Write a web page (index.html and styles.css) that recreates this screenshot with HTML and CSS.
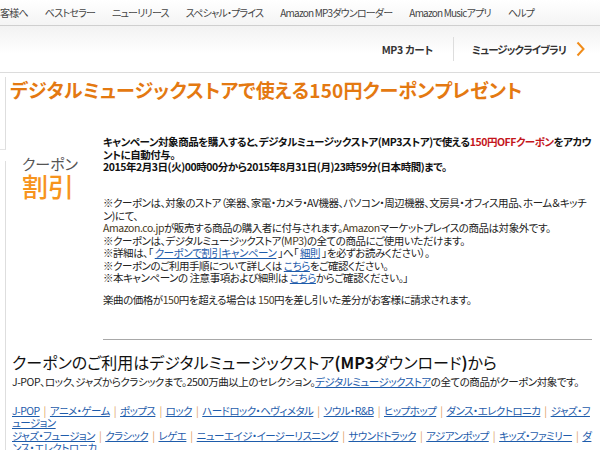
FILE: index.html
```html
<!DOCTYPE html>
<html lang="ja">
<head>
<meta charset="utf-8">
<title>デジタルミュージックストア クーポン</title>
<link rel="stylesheet" href="styles.css">
</head>
<body>
<nav class="topnav">
  <a href="#">客様へ</a>
  <a href="#">ベストセラー</a>
  <a href="#">ニューリリース</a>
  <a href="#">スペシャル・プライス</a>
  <a href="#">Amazon MP3ダウンローダー</a>
  <a href="#">Amazon Musicアプリ</a>
  <a href="#">ヘルプ</a>
</nav>
<div class="subnav">
  <a class="subnav-item cart" href="#">MP3 カート</a>
  <span class="subnav-divider"></span>
  <a class="subnav-item lib" href="#">ミュージックライブラリ</a>
  <svg class="chevron" width="9" height="16" viewBox="0 0 9 16"><path d="M1.5 1.5 L7.5 8 L1.5 14.5" fill="none" stroke="#f08c1a" stroke-width="2"/></svg>
</div>
<div class="page">
  <div class="rail">
    <div class="rail-seg first"></div>
    <div class="rail-seg second"></div>
  </div>
  <main class="content">
    <h1 class="title">デジタルミュージックストアで使える150円クーポンプレゼント</h1>
    <div class="coupon-row">
      <div class="badge">
        <div class="badge-top">クーポン</div>
        <div class="badge-main">割引</div>
      </div>
      <div class="coupon-text">
        <p class="lead">キャンペーン対象商品を購入すると、デジタルミュージックストア(MP3ストア)で使える<span class="red">150円OFFクーポン</span>をアカウントに自動付与。<br>2015年2月3日(火)00時00分から2015年8月31日(月)23時59分(日本時間)まで。</p>
        <p class="notes">※クーポンは、対象のストア（楽器、家電・カメラ・AV機器、パソコン・周辺機器、文房具・オフィス用品、ホーム＆キッチン)にて、<br><span class="latin">Amazon.co.jp</span>が販売する商品の購入者に付与されます。<span class="latin">Amazon</span>マーケットプレイスの商品は対象外です。<br>※クーポンは、デジタルミュージックストア(<span class="latin">MP3</span>)の全ての商品にご使用いただけます。<br>※詳細は、「 <a href="#">クーポンで割引キャンペーン</a> 」へ「 <a href="#">細則</a> 」を必ずお読みください）。<br>※クーポンのご利用手順について詳しくは <a href="#">こちら</a>をご確認ください。<br>※本キャンペーンの 注意事項および細則は <a href="#">こちら</a>からご確認ください。」</p>
        <p class="price">楽曲の価格が<span class="latin">150</span>円を超える場合は <span class="latin">150</span>円を差し引いた差分がお客様に請求されます。</p>
        <hr class="sep">
      </div>
    </div>
    <h2 class="store-title">クーポンのご利用はデジタルミュージックストア<b>(MP3</b>ダウンロード<b>)</b>から</h2>
    <p class="store-sub">J-POP、ロック、ジャズからクラシックまで。2500万曲以上のセレクション。<a href="#">デジタルミュージックストア</a>の全ての商品がクーポン対象です。</p>
    <p class="genres"><a href="#">J-POP</a><span class="bar">|</span><a href="#">アニメ・ゲーム</a><span class="bar">|</span><a href="#">ポップス</a><span class="bar">|</span><a href="#">ロック</a><span class="bar">|</span><a href="#">ハードロック・ヘヴィメタル</a><span class="bar">|</span><a href="#">ソウル・R&amp;B</a><span class="bar">|</span><a href="#">ヒップホップ</a><span class="bar">|</span><a href="#">ダンス・エレクトロニカ</a><span class="bar">|</span><a href="#">ジャズ・フュージョン</a></p>
    <p class="genres"><a href="#">ジャズ・フュージョン</a><span class="bar">|</span><a href="#">クラシック</a><span class="bar">|</span><a href="#">レゲエ</a><span class="bar">|</span><a href="#">ニューエイジ・イージーリスニング</a><span class="bar">|</span><a href="#">サウンドトラック</a><span class="bar">|</span><a href="#">アジアンポップ</a><span class="bar">|</span><a href="#">キッズ・ファミリー</a><span class="bar">|</span><a href="#">ダンス・エレクトロニカ</a></p>
  </main>
</div>
</body>
</html>
```

FILE: styles.css
```css
html, body {
  margin: 0;
  padding: 0;
  overflow: hidden;
  background: #fff;
}
body {
  width: 600px;
  font-family: "Noto Sans CJK JP", "Noto Sans", sans-serif;
  font-feature-settings: "palt";
  color: #222;
  font-size: 10.5px;
  letter-spacing: -0.45px;
}
a { color: inherit; text-decoration: none; }

.topnav {
  height: 25px;
  border-bottom: 1px solid #cfcfcf;
  background: linear-gradient(#ffffff, #f4f4f4);
  display: flex;
  align-items: center;
  gap: 17px;
  white-space: nowrap;
}
.topnav a {
  color: #444;
  font-size: 10px;
  letter-spacing: -0.8px;
  line-height: 25px;
}

.subnav {
  height: 46px;
  border-bottom: 1px solid #dcdcdc;
  background: linear-gradient(#f2f2f2, #ffffff 60%);
  display: flex;
  align-items: center;
  justify-content: flex-end;
  padding-right: 15px;
}
.subnav-item {
  font-size: 10.5px;
  font-weight: bold;
  color: #333;
}
.subnav-item.cart { letter-spacing: -0.3px; }
.subnav-item.lib { letter-spacing: -0.9px; }
.subnav-divider {
  width: 1px;
  height: 24px;
  background: #ddd;
  margin: 0 18px 0 20px;
}
.chevron {
  margin-left: 10px;
}

.page {
  display: grid;
  grid-template-columns: 6px 1fr;
  padding-right: 8px;
}
.rail {
  display: flex;
  flex-direction: column;
  padding-top: 4px;
}
.rail-seg {
  border-right: 1px solid #dedede;
}
.rail-seg.first {
  height: 72px;
  border-bottom: 1px solid #e4e4e4;
}
.rail-seg.second {
  margin-top: 11px;
  flex: 1;
}

.content {
  padding-left: 4px;
  min-width: 0;
}
.title {
  margin: 5px 0 0 0;
  font-size: 19px;
  line-height: 24px;
  font-weight: bold;
  color: #e47911;
  letter-spacing: 0.2px;
}

.coupon-row {
  display: flex;
  margin-top: 34px;
}
.badge {
  width: 93px;
  padding-left: 12px;
  box-sizing: border-box;
  padding-top: 19px;
  flex: none;
  letter-spacing: 0;
}
.badge-top {
  font-size: 15px;
  line-height: 17px;
  color: #555;
}
.badge-main {
  font-size: 26px;
  line-height: 28px;
  font-weight: 500;
  color: #f7941d;
}
.coupon-text {
  flex: 1;
  min-width: 0;
}
.coupon-text p {
  margin: 0;
  line-height: 12.5px;
}
.lead {
  font-weight: bold;
  color: #111;
}
.red { color: #c4161c; }
.notes {
  margin-top: 23.5px !important;
  color: #222;
}
.notes a, .store-sub a, .genres a {
  color: #1e5cab;
  text-decoration: underline;
}
.latin { color: #4a3a1c; }
.price {
  margin-top: 9px !important;
}
.sep {
  margin: 33px 0 0 0;
  border: 0;
  border-top: 1px solid #a8a8a8;
  height: 0;
}

.store-title {
  margin: 12px 0 0 2px;
  font-size: 16px;
  line-height: 21px;
  font-weight: normal;
  color: #111;
  letter-spacing: 0;
}
.store-title b { font-weight: bold; }
.store-sub {
  margin: 3px 0 0 2px;
  line-height: 12.5px;
  color: #222;
}
.genres {
  margin: 0 -6px 0 2px;
  line-height: 12.5px;
  letter-spacing: -0.55px;
  line-break: anywhere;
  word-break: break-all;
}
.store-sub + .genres {
  margin-top: 16px;
}
.bar {
  color: #e0a060;
  padding: 0 4px;
}
```
